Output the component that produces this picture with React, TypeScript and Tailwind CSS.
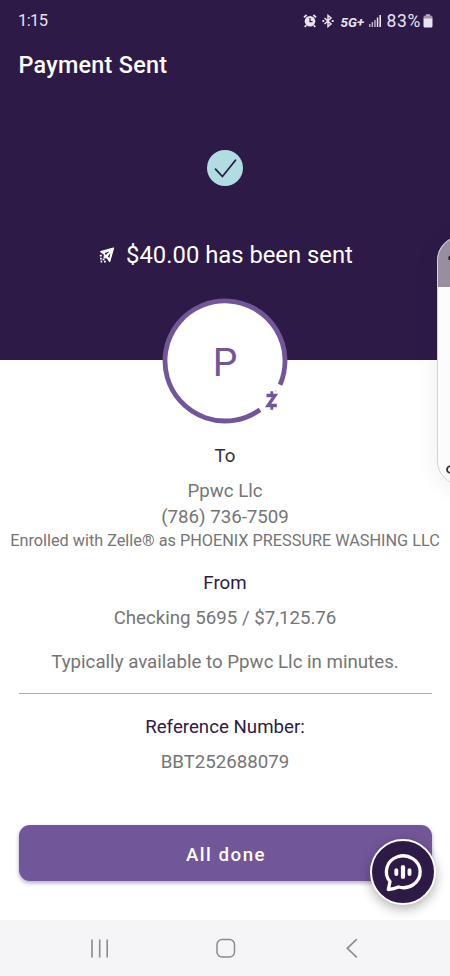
import type { ReactNode } from 'react'

interface LineProps {
  className: string
  children: ReactNode
}

function Line({ className, children }: LineProps) {
  return <p className={`flex items-center justify-center whitespace-nowrap ${className}`}>{children}</p>
}

function StatusBar() {
  return (
    <div className="flex h-[42px] items-center justify-between pl-[18px] pr-[17px] text-[#e9e2ef]">
      <span className="text-[16.5px] tracking-[-0.6px]">1:15</span>
      <div className="flex items-center">
        <svg className="h-[14px] w-[14px]" viewBox="0 0 14 14" fill="none">
          <circle cx="7" cy="7.3" r="5.3" fill="currentColor" />
          <path d="M1 3.4 3.6 1M13 3.4 10.4 1M3.2 11.2 1.8 13M10.8 11.2l1.4 1.8" stroke="currentColor" strokeWidth="1.8" />
          <path d="M7 4v3.6h2.5" stroke="#2e1a47" strokeWidth="1.2" />
        </svg>
        <svg className="ml-[5px] h-[14px] w-[12px]" viewBox="0 0 12 14" fill="none" stroke="currentColor" strokeWidth="1.5">
          <path d="m2.5 4 6.500 6L6 12.500v-11L9 4l-6.500 6" />
          <path d="M.4 7h1.800M9.800 7h1.800" strokeWidth="1.800" />
        </svg>
        <span className="ml-[6px] mt-[3px] w-[25px] text-[13.500px] font-bold italic leading-none tracking-[0.1px]">5G+</span>
        <svg className="ml-[4px] h-[12px] w-[12px]" viewBox="0 0 12 12" fill="currentColor">
          <path d="M0 9h1.500v3H0zM2.600 7h1.500v5H2.600zM5.200 5h1.500v7H5.200z" opacity=".75" />
          <path d="M7.800 2.500h1.500V12H7.800zM10.400 0H12v12h-1.600z" />
        </svg>
        <span className="ml-[5px] text-[17.500px] tracking-[0.7px]">83%</span>
        <svg className="ml-[2px] h-[14px] w-[10px]" viewBox="0 0 10 14" fill="currentColor">
          <path d="M3 0h4v2H3z" opacity=".6" />
          <path d="M2 1.500h6a1.500 1.500 0 0 1 1.500 1.500v2h-9V3A1.500 1.500 0 0 1 2 1.500z" opacity=".6" />
          <path d="M.5 4.500h9v7.500a1.500 1.500 0 0 1-1.500 1.500H2A1.500 1.500 0 0 1 .5 12z" />
        </svg>
      </div>
    </div>
  )
}

function SendIcon() {
  return (
    <svg className="h-[16px] w-[16px]" viewBox="0 0 16 16" fill="none" stroke="white">
      <path d="M14.500 1.200 1.800 4.600l3.700 2.700-.3 3.200 3 .3 2.400 3.700z" fill="white" strokeWidth="1.300" strokeLinejoin="round" />
      <path d="m5.800 5.900 4.600-1.500L6.800 8zM8.800 9.600l2.400-3.500-.7 4.900z" fill="#2e1a47" stroke="none" />
      <path d="M.8 8.700h2M1 11.700h1.800M3.600 12.300h1.900M1.600 14.500h1.600M5 14.600h1.800" strokeWidth="1.800" />
    </svg>
  )
}

function Avatar() {
  return (
    <div className="relative h-[126px] w-[126px]">
      <svg className="h-full w-full" viewBox="0 0 126 126" fill="none">
        <circle cx="63" cy="63" r="61" fill="white" />
        <path d="M98 111.700A60 60 0 1 1 118.100 86.700" stroke="#72569a" strokeWidth="4.800" />
        <path d="M104.500 97.500h8.500L106 107.500h8.800" stroke="#72569a" strokeWidth="3.300" />
        <path d="M109.800 93.300v4M109.800 107.800v4" stroke="#72569a" strokeWidth="2.800" />
        <circle cx="113.800" cy="93" r=".8" fill="#b9abcd" />
      </svg>
      <span className="absolute inset-0 flex items-center justify-center pt-[4px] text-[39px] text-[#72569a]">P</span>
    </div>
  )
}

// Slice of the edge panel that peeks in over the right side of the screen
function EdgePanel() {
  return (
    <div className="absolute left-[436.5px] top-[236px] h-[249px] w-[60px] overflow-hidden rounded-[24px] border border-[#d4d4d6] bg-[#fcfcfc] shadow-[0_2px_24px_rgba(0,0,0,0.08)]">
      <div className="h-[50px] bg-[#978e9f]" />
      <svg className="absolute left-0 top-0 h-[247px] w-[13px]" viewBox="0 0 13 247" fill="none">
        <circle cx="12.500" cy="21" r="2.400" fill="#2b2330" />
        <circle cx="12.500" cy="232.500" r="3.500" stroke="#333" strokeWidth="1.800" />
      </svg>
    </div>
  )
}

function ChatButton() {
  return (
    <button className="absolute left-[370px] top-[839px] h-[66px] w-[66px] rounded-full border-2 border-white bg-[#2e1a47] shadow-[0_4px_12px_rgba(0,0,0,0.3)]">
      <svg className="h-[62px] w-[62px]" viewBox="0 0 62 62" fill="none" stroke="white" strokeLinecap="round" strokeLinejoin="round">
        <path d="M16.300 48.500 18 40.600A16.900 15.900 0 1 1 26.500 46C23.500 47.500 20.500 48.300 16.300 48.500z" strokeWidth="3.300" />
        <path d="M24.300 29.200v3.800M37.500 29.200v3.800" strokeWidth="3.900" />
        <path d="M31 26.200v9.800" strokeWidth="4.200" />
      </svg>
    </button>
  )
}

function NavBar() {
  return (
    <nav className="flex h-[56px] items-center bg-[#f5f5f8] text-[#8b8b8e]">
      <svg className="ml-[90px] h-[20px] w-[20px]" viewBox="0 0 20 20" stroke="currentColor" strokeWidth="1.600">
        <path d="M2 1.500v18M9.700 1.500v18M17.200 1.500v18" />
      </svg>
      <svg className="ml-[106px] h-[20px] w-[20px]" viewBox="0 0 20 20" fill="none" stroke="currentColor" strokeWidth="1.500">
        <rect x="1" y="1.500" width="17.500" height="17.500" rx="5" />
      </svg>
      <svg className="ml-[109px] h-[20px] w-[14px]" viewBox="0 0 14 20" fill="none" stroke="currentColor" strokeWidth="1.600">
        <path d="M11.800 1.200 2.300 10.300l9.500 9" />
      </svg>
    </nav>
  )
}

export default function App() {
  return (
    <div className="relative flex h-[976px] w-[450px] flex-col overflow-hidden bg-white font-['Roboto',sans-serif] text-[#757575]">
      <header className="flex h-[360px] shrink-0 flex-col bg-[#2e1a47] text-white">
        <StatusBar />
        <h1 className="pl-[18.5px] pt-[7px] text-[23.4px] font-medium leading-[32px] tracking-[0.25px]">Payment Sent</h1>
        <div className="mt-[69px] flex justify-center">
          <svg className="h-[36px] w-[36px]" viewBox="0 0 36 36" fill="none">
            <circle cx="18" cy="18" r="18" fill="#b1dde2" />
            <path d="m8.500 19.200 6.900 7.300L28.500 10.200" stroke="#2e1a47" strokeWidth="1.800" strokeLinecap="round" />
          </svg>
        </div>
        <div className="mt-[53px] flex h-[32px] items-center justify-center gap-[11px] pl-[2px]">
          <SendIcon />
          <span className="pt-px text-[23.8px]">$40.00 has been sent</span>
        </div>
      </header>
      <main className="flex grow flex-col items-center text-[18.7px] leading-[26px]">
        <div className="-mt-[62px]">
          <Avatar />
        </div>
        <Line className="mt-[19px] text-[#333036]">To</Line>
        <Line className="mt-[9px]">Ppwc Llc</Line>
        <Line className="h-[25px]">(786) 736-7509</Line>
        <Line className="h-[23px] text-[16.25px]">Enrolled with Zelle® as PHOENIX PRESSURE WASHING LLC</Line>
        <Line className="mt-[18px] text-[#2e1a47]">From</Line>
        <Line className="mt-[9px]">Checking 5695 / $7,125.76</Line>
        <Line className="mt-[18px]">Typically available to Ppwc Llc in minutes.</Line>
        <hr className="mt-[18px] w-[413px] border-[#aeaeae]" />
        <Line className="mt-[20px] text-[#2e1a47]">Reference Number:</Line>
        <Line className="mt-[9px]">BBT252688079</Line>
        <button className="mt-[50px] h-[56px] w-[413px] rounded-[11px] bg-[#72569a] pl-[2px] pt-[3px] text-[18.7px] font-medium tracking-[1.5px] text-white shadow-[0_2px_4px_rgba(60,40,100,0.4)]">
          All done
        </button>
      </main>
      <NavBar />
      <EdgePanel />
      <ChatButton />
    </div>
  )
}
